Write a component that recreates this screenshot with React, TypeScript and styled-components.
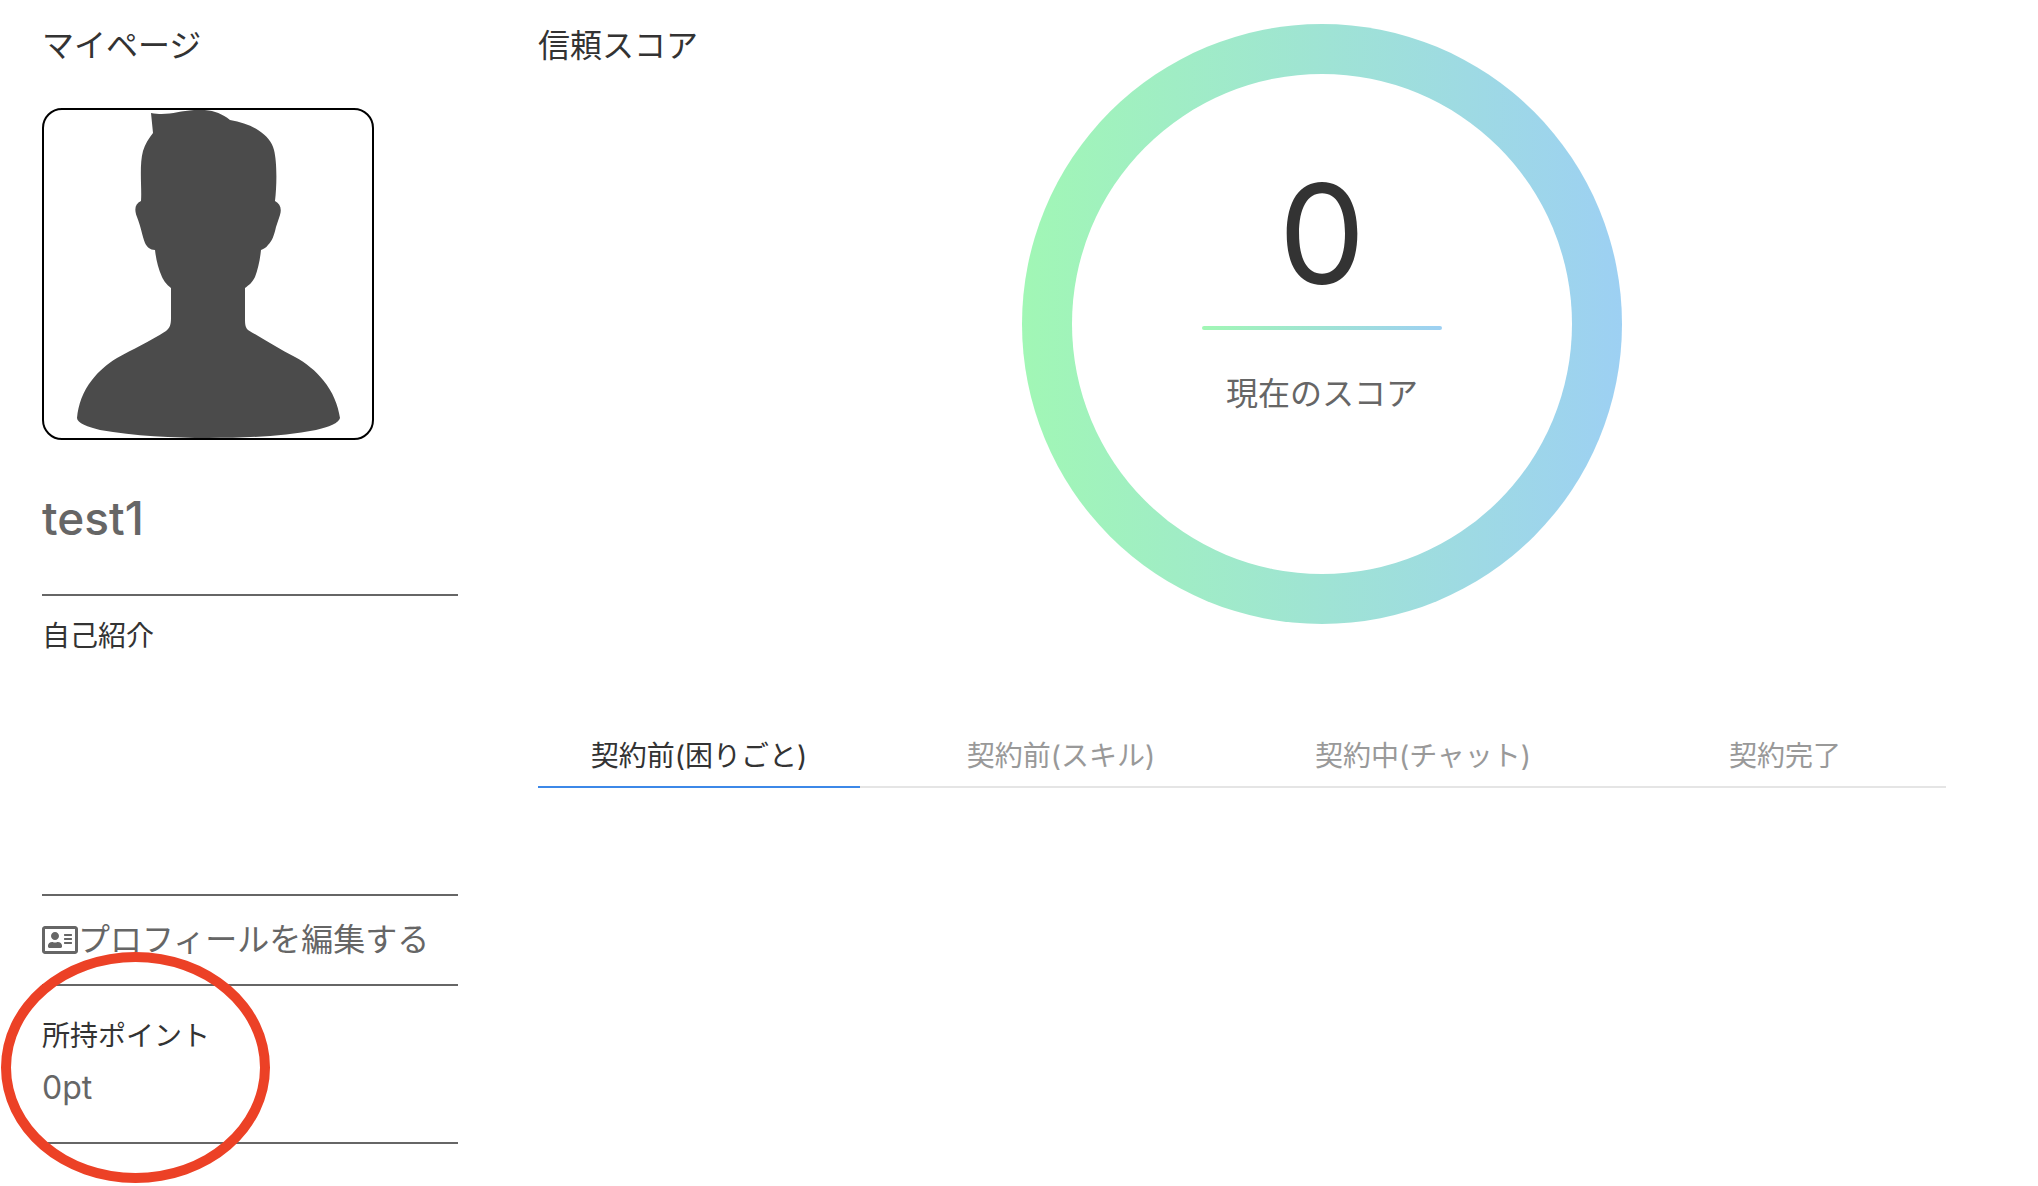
import React, { useState } from "react";
import styled, { createGlobalStyle } from "styled-components";
import { FaRegAddressCard } from "react-icons/fa";

const GlobalStyle = createGlobalStyle`
  *, *::before, *::after { box-sizing: border-box; }
  body {
    margin: 0;
    background: #fff;
    color: #333;
    font-family: Inter, "Noto Sans CJK JP", sans-serif;
    font-size: 32px;
    line-height: 48px;
  }
`;

const Page = styled.div`
  display: flex;
  align-items: flex-start;
  gap: 80px;
  min-height: 100vh;
  padding: 24px 92px 24px 42px;
`;

const Sidebar = styled.aside`
  flex: 0 0 416px;
`;

const Heading = styled.h1`
  margin: 0;
  flex: none;
  font-size: 32px;
  line-height: 44px;
  font-weight: 400;
`;

const Avatar = styled.svg`
  display: block;
  width: 332px;
  height: 332px;
  margin-top: 40px;
  border: 2px solid #000;
  border-radius: 20px;
`;

const UserName = styled.h2`
  margin: 0;
  padding: 42px 0 40px;
  color: #666;
  font-size: 46px;
  line-height: 72px;
  font-weight: 500;
`;

const Section = styled.section<{ $minHeight?: number }>`
  min-height: ${(p) => p.$minHeight ?? 0}px;
  padding: 20px 0;
  border-top: 2px solid #666;
`;

const Points = styled(Section)`
  padding: 30px 0;
  border-bottom: 2px solid #666;
  position: relative;
`;

const SectionTitle = styled.h3`
  margin: 0;
  font-size: 28px;
  line-height: 40px;
  font-weight: 400;
`;

const PointValue = styled.p`
  margin: 8px 0 0;
  color: #666;
`;

const EditLink = styled.a`
  display: flex;
  align-items: center;
  color: #666;
  text-decoration: none;
  white-space: nowrap;

  svg {
    flex: none;
    width: 36px;
    height: 32px;
  }
`;

const Highlight = styled.span`
  position: absolute;
  top: -34px;
  left: -41px;
  width: 269px;
  height: 231px;
  border: 10px solid #ec4126;
  border-radius: 50%;
  pointer-events: none;
`;

const Main = styled.main`
  flex: 1;
  min-width: 0;
`;

const ScoreRow = styled.section`
  display: flex;
  align-items: flex-start;
`;

const RingArea = styled.div`
  flex: 1;
  display: flex;
  justify-content: center;
`;

const Ring = styled.div`
  width: 600px;
  height: 600px;
  padding: 50px;
  border-radius: 50%;
  background: linear-gradient(to right, #a1f7b5, #9dd0f3);
`;

const RingInner = styled.div`
  display: flex;
  flex-direction: column;
  align-items: center;
  height: 100%;
  padding-top: 76px;
  border-radius: 50%;
  background: #fff;
`;

const Score = styled.p`
  margin: 0;
  font-size: 138px;
  line-height: 168px;
`;

const ScoreBar = styled.div`
  width: 240px;
  height: 4px;
  margin: 8px 0 40px;
  border-radius: 2px;
  background: linear-gradient(to right, #a1f7b5, #9dd0f3);
`;

const ScoreLabel = styled.p`
  margin: 0;
  color: #666;
`;

const Tabs = styled.div`
  display: grid;
  grid-template-columns: repeat(4, 1fr);
  gap: 40px;
  margin-top: 103px;
  box-shadow: inset 0 -2px #e5e5e5;
`;

const Tab = styled.button<{ $active: boolean }>`
  padding: 8px 0 9px;
  border: 0;
  border-bottom: 2px solid ${(p) => (p.$active ? "#3c88e8" : "transparent")};
  background: none;
  color: ${(p) => (p.$active ? "#333" : "#999")};
  font: inherit;
  font-size: 28px;
  line-height: 42px;
  white-space: nowrap;
  cursor: pointer;
`;

const TABS = ["契約前(困りごと)", "契約前(スキル)", "契約中(チャット)", "契約完了"];

export default function App() {
  const [active, setActive] = useState(0);
  return (
    <>
      <GlobalStyle />
      <Page>
        <Sidebar>
          <Heading>マイページ</Heading>
          <Avatar viewBox="0 0 328 328" role="img" aria-label="test1">
            <path
              fill="#4b4b4b"
              d="M107 3 C124 6 134 1 150 0 C166 -1 176 2 186 10 C197 12 206 15 214 20
                 C223 26 228 32 230 40 C233 52 233 74 231 91 C236 94 238 98 236 105 L232 117
                 C230 126 228 131 224 135 C222 138 219 139 217 140 C216 150 214 159 211 167
                 C208 173 205 175 201 178 V210 C201 216 202 218 204 220 C219 229 235 239 251 247
                 C262 253 272 261 279 270 C289 282 294 295 296 308 C295 313 285 317 272 320
                 C240 326 205 328 164 328 C130 328 90 326 56 320 C44 317 33 313 33 308
                 C34 295 39 281 48 270 C55 261 63 254 73 248 C89 239 105 232 122 221
                 C126 218 127 214 127 208 V178 C122 174 120 171 118 167 C114 158 112 149 111 140
                 C106 140 103 137 101 133 C98 125 97 117 93 107 C90 99 91 94 97 91
                 C98 78 95 56 99 41 C101 34 105 28 109 23 Z"
            />
          </Avatar>
          <UserName>test1</UserName>
          <Section $minHeight={300}>
            <SectionTitle>自己紹介</SectionTitle>
          </Section>
          <Section $minHeight={90}>
            <EditLink href="#edit">
              <FaRegAddressCard aria-hidden />
              プロフィールを編集する
            </EditLink>
          </Section>
          <Points>
            <SectionTitle>所持ポイント</SectionTitle>
            <PointValue>0pt</PointValue>
            <Highlight />
          </Points>
        </Sidebar>
        <Main>
          <ScoreRow>
            <Heading as="h2">信頼スコア</Heading>
            <RingArea>
              <Ring>
                <RingInner>
                  <Score>0</Score>
                  <ScoreBar />
                  <ScoreLabel>現在のスコア</ScoreLabel>
                </RingInner>
              </Ring>
            </RingArea>
          </ScoreRow>
          <Tabs role="tablist">
            {TABS.map((label, i) => (
              <Tab
                key={label}
                type="button"
                role="tab"
                aria-selected={i === active}
                $active={i === active}
                onClick={() => setActive(i)}
              >
                {label}
              </Tab>
            ))}
          </Tabs>
        </Main>
      </Page>
    </>
  );
}
